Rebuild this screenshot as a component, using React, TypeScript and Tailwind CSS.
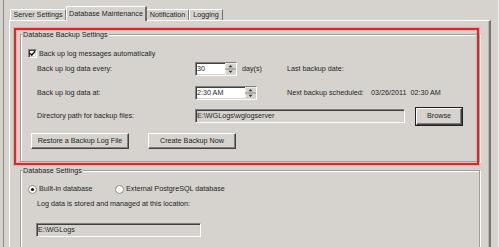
import type { ReactNode } from 'react'

const sunken =
  'border border-t-[#808080] border-l-[#808080] border-b-white border-r-white shadow-[inset_1px_1px_0_#404040,inset_-1px_-1px_0_#d4d0c8]'
const raised =
  'border border-t-white border-l-white border-b-[#404040] border-r-[#404040] shadow-[inset_-1px_-1px_0_#808080]'

function CheckBox() {
  return (
    <span className={`w-[9px] h-[9px] bg-white flex items-center justify-center ${sunken}`}>
      <svg width="7" height="7" viewBox="0 0 7 7">
        <path d="M1 3.2 L2.8 5.2 L6 1.2" fill="none" stroke="#111" strokeWidth="1.4" />
      </svg>
    </span>
  )
}

function Radio({ on }: { on?: boolean }) {
  return (
    <svg width="9" height="9" viewBox="0 0 9 9">
      <circle cx="4.5" cy="4.5" r="4" fill="#fff" stroke="#8a8883" strokeWidth="1" />
      {on && <circle cx="4.5" cy="4.5" r="1.6" fill="#111" />}
    </svg>
  )
}

function Spinner() {
  return (
    <svg width="11" height="12" viewBox="0 0 11 12" className="shrink-0">
      <rect x="0" y="0" width="11" height="12" fill="#d6d3ce" />
      <path d="M0 0 H11 M0 0 V12" stroke="#fff" />
      <path d="M0 6 H11" stroke="#8a8883" />
      <path d="M5.5 2 L3.5 4.2 H7.5 Z" fill="#333" />
      <path d="M3.5 7.8 H7.5 L5.5 10 Z" fill="#333" />
    </svg>
  )
}

function SpinBox({ value, w }: { value: string; w: string }) {
  return (
    <div className={`${w} h-[14px] bg-white flex items-center justify-between pl-[1px] ${sunken}`}>
      <span>{value}</span>
      <Spinner />
    </div>
  )
}

function Btn({ children, w, isDefault }: { children: ReactNode; w: string; isDefault?: boolean }) {
  if (isDefault) {
    return (
      <div className={`${w} h-[19px] border border-[#222] flex`}>
        <div className={`flex-1 flex items-center justify-center ${raised}`}>{children}</div>
      </div>
    )
  }
  return <div className={`${w} h-[16px] flex items-center justify-center ${raised}`}>{children}</div>
}

export default function App() {
  return (
    <div className="w-[500px] h-[247px] bg-[#d6d3ce] flex overflow-hidden relative font-['Liberation_Sans',Arial,sans-serif] text-[7.2px] leading-none text-[#1e1e1e]">
      <div className="w-[3px]" />
      <div className="w-px bg-[#8e8c87]" />
      <div className="w-[5px]" />

      <div className="w-[482px] flex flex-col">
        {/* tabs */}
        <div className="shrink-0 h-[20px] flex items-end pl-[1px]">
          <div className="w-[56px] h-[11px] flex items-center justify-center border-l border-t border-white border-r border-r-[#808080]">
            Server Settings
          </div>
          <div className="relative z-10 -mb-px w-[81px] h-[15px] flex items-center justify-center bg-[#d6d3ce] border-l border-t border-white border-r-2 border-r-[#6f6d69] pb-[1px]">
            Database Maintenance
          </div>
          <div className="w-[42px] h-[11px] flex items-center justify-center border-t border-white border-r border-r-[#808080]">
            Notification
          </div>
          <div className="w-[34px] h-[11px] flex items-center justify-center border-l border-t border-white border-r border-r-[#6f6d69]">
            Logging
          </div>
        </div>

        {/* panel */}
        <div className="flex-1 min-h-0 overflow-hidden border-l border-t border-white border-r-2 border-r-[#77756f] shadow-[inset_-1px_0_0_#b9b6b0] pl-[10px] pt-[8px]">
          <fieldset className="w-[460px] border border-[#a09d97] shadow-[inset_1px_1px_0_#fff,1px_1px_0_#fff] pl-[1px] pb-[12px]">
            <legend className="px-[1px] leading-[11px] bg-[#d6d3ce]">Database Backup Settings</legend>
            <div className="pl-[6px] pt-[8px] flex flex-col">
              <div className="h-[11px] flex items-center gap-[2px]">
                <CheckBox />
                <span>Back up log messages automatically</span>
              </div>

              <div className="mt-[3px] h-[14px] flex items-center">
                <span className="ml-[9px] w-[158px]">Back up log data every:</span>
                <div className="w-[92px] flex items-center">
                  <SpinBox value="30" w="w-[42px]" />
                  <span className="ml-[5px]">day(s)</span>
                </div>
                <span>Last backup date:</span>
              </div>

              <div className="mt-[10px] h-[14px] flex items-center">
                <span className="ml-[9px] w-[158px]">Back up log data at:</span>
                <div className="w-[92px] flex items-center">
                  <SpinBox value="2:30 AM" w="w-[62px]" />
                </div>
                <span className="w-[84px]">Next backup scheduled:</span>
                <span className="whitespace-pre">03/26/2011  02:30 AM</span>
              </div>

              <div className="mt-[6px] h-[20px] flex items-center">
                <span className="ml-[9px] w-[158px]">Directory path for backup files:</span>
                <div className={`w-[210px] h-[14px] flex items-center pl-[1px] bg-[#d6d3ce] ${sunken}`}>
                  E:\WGLogs\wglogserver
                </div>
                <div className="ml-[10px]">
                  <Btn w="w-[48px]" isDefault>
                    Browse
                  </Btn>
                </div>
              </div>

              <div className="mt-[7px] flex items-center">
                <div className="ml-[3px]">
                  <Btn w="w-[98px]">Restore a Backup Log File</Btn>
                </div>
                <div className="ml-[19px]">
                  <Btn w="w-[88px]">Create Backup Now</Btn>
                </div>
              </div>
            </div>
          </fieldset>

          <fieldset className="mt-[3px] w-[460px] h-[200px] border border-[#a09d97] shadow-[inset_1px_1px_0_#fff,1px_1px_0_#fff] pl-[1px]">
            <legend className="px-[1px] leading-[11px] bg-[#d6d3ce]">Database Settings</legend>
            <div className="pl-[6px] pt-[8px] flex flex-col">
              <div className="h-[10px] flex items-center">
                <div className="w-[87px] flex items-center gap-[2px]">
                  <Radio on />
                  <span>Built-in database</span>
                </div>
                <div className="flex items-center gap-[2px]">
                  <Radio />
                  <span>External PostgreSQL database</span>
                </div>
              </div>
              <div className="mt-[5px] h-[10px] flex items-center ml-[9px]">
                Log data is stored and managed at this location:
              </div>
              <div className={`mt-[14px] ml-[8px] w-[165px] h-[14px] flex items-center pl-[1px] bg-[#d6d3ce] ${sunken}`}>
                E:\WGLogs
              </div>
            </div>
          </fieldset>
        </div>
      </div>

      <div className="w-[7px]" />
      <div className="w-px bg-[#ebe9e5]" />

      {/* red annotation frame drawn over the screenshot */}
      <div className="absolute left-[14px] top-[28px] w-[465px] h-[137px] border-2 border-[#d22b2b] shadow-[0_0_1px_1px_rgba(235,140,140,0.55),inset_0_0_1px_1px_rgba(235,140,140,0.55)] pointer-events-none" />
    </div>
  )
}
